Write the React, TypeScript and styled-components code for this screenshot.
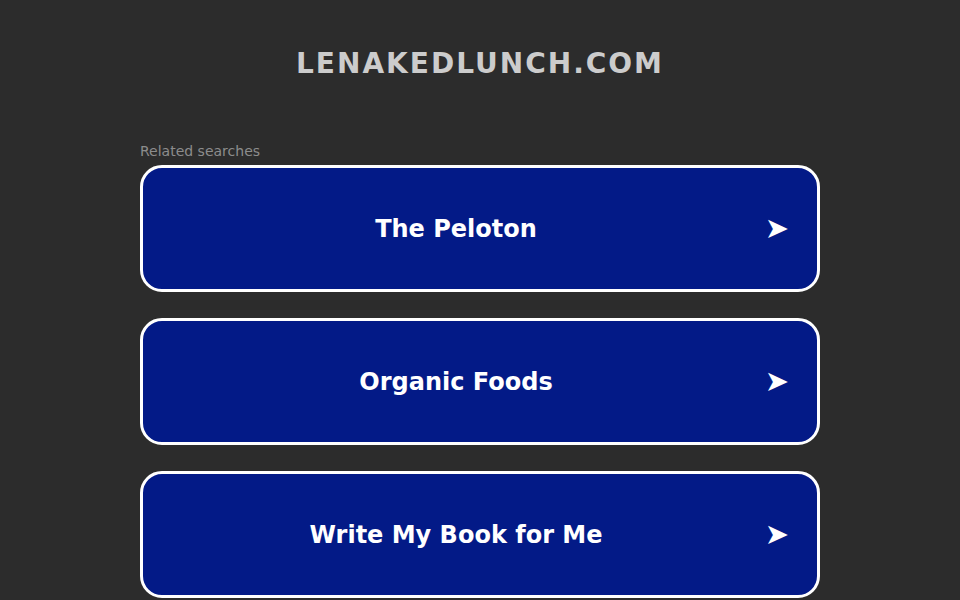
import React from "react";
import styled, { createGlobalStyle } from "styled-components";

const GlobalStyle = createGlobalStyle`
	html, body {
		margin: 0;
		padding: 0;
		background-color: #2c2c2c;
		font-family: "DejaVu Sans", Verdana, sans-serif;
	}
`;

const Page = styled.div`
	display: flex;
	flex-direction: column;
	align-items: center;
	min-height: 600px;
`;

const Domain = styled.h1`
	margin: 47px 0 0;
	font-size: 28px;
	font-weight: bold;
	letter-spacing: 2px;
	line-height: 34px;
	color: #cccccc;
`;

const Listing = styled.div`
	width: 680px;
	margin-top: 62px;
	display: flex;
	flex-direction: column;
`;

const Caption = styled.div`
	font-size: 14px;
	line-height: 17px;
	color: #8c8c8c;
	margin-bottom: 5px;
`;

const SearchLink = styled.a`
	box-sizing: border-box;
	display: flex;
	align-items: center;
	height: 127px;
	margin-bottom: 26px;
	padding: 0 20px;
	border: 3px solid #ffffff;
	border-radius: 22px;
	background-color: #031a87;
	color: #ffffff;
	text-decoration: none;
`;

const SearchLabel = styled.span`
	flex: 1;
	text-align: center;
	font-size: 24px;
	font-weight: bold;
`;

const Arrow = styled.span`
	box-sizing: border-box;
	width: 48px;
	text-align: right;
	padding-right: 8px;
	font-size: 29px;
	line-height: 1;
`;

const searches = ["The Peloton", "Organic Foods", "Write My Book for Me"];

export default function App() {
	return (
		<Page>
			<GlobalStyle />
			<Domain>LENAKEDLUNCH.COM</Domain>
			<Listing>
				<Caption>Related searches</Caption>
				{searches.map((term) => (
					<SearchLink key={term} href="#">
						<SearchLabel>{term}</SearchLabel>
						<Arrow>➤</Arrow>
					</SearchLink>
				))}
			</Listing>
		</Page>
	);
}
